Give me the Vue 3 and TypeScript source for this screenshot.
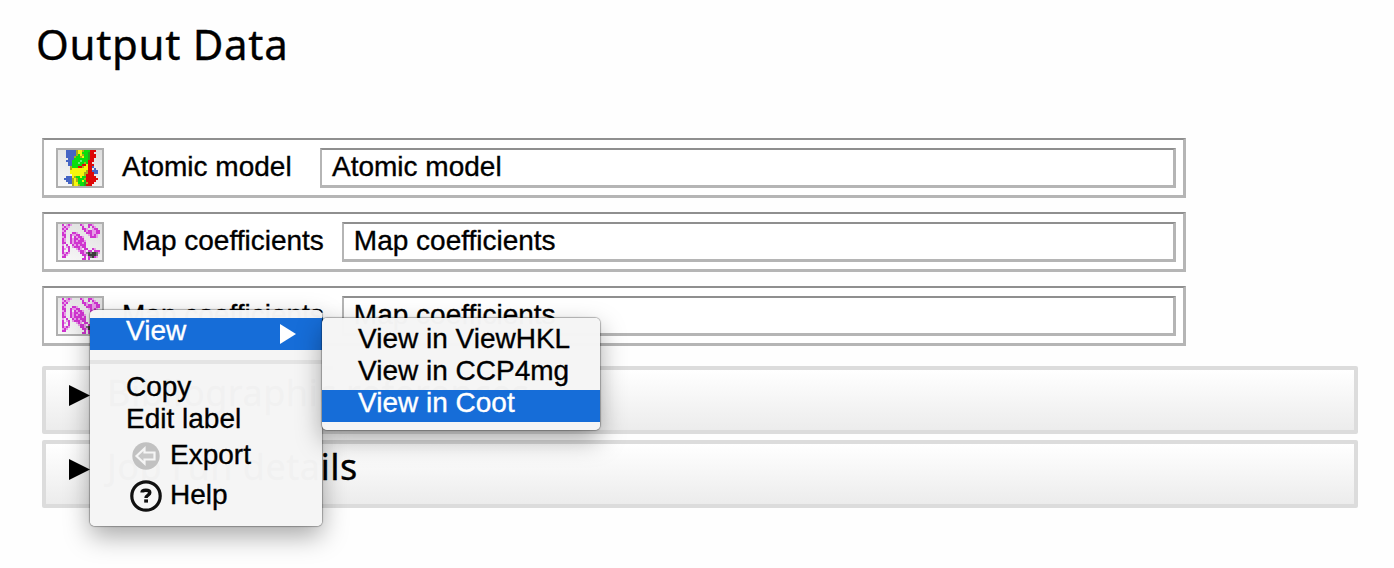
<script setup lang="ts">
interface DataRow { label: string; value: string; icon: 'model' | 'map' }

const rows: DataRow[] = [
  { label: 'Atomic model', value: 'Atomic model', icon: 'model' },
  { label: 'Map coefficients', value: 'Map coefficients', icon: 'map' },
  { label: 'Map coefficients', value: 'Map coefficients', icon: 'map' },
]

const sections: string[] = ['Bibliographic references', 'Job run details']

const palette: Record<string, string> = {
  B: '#4665c4', G: '#0ade0e', g: '#2fa01c', Y: '#f7f50c', O: '#a9ab1c', L: '#66ee77',
  R: '#dd0808', P: '#cf35cf', p: '#e79be7', K: '#3c3c3c', k: '#777777',
}

const bitmaps: Record<DataRow['icon'], string[]> = {
  model: [
    '....BBBBBOYYOGGGRRR...',
    '....BBBBBOYYGGGgRR....',
    '....BBBBBOGYOGGgRRR...',
    '....BBBBOGGOYGGgRRR...',
    '.....BBBGGGGGGGgRR....',
    '....BBBGGGGLGGGRRR....',
    '.....BBGGGLGGOGRR.....',
    '.....BBGGGGGRRYRRR....',
    '......OGGGRROYYRRB....',
    '......OYYYYYYYYRR.B...',
    '......YYYYYYYYORRBBB..',
    '......YYYYYYYOORRRBB..',
    '.......YYYYYYORRRR....',
    '....BBBYOGGYGGRRRRR...',
    '...BBBBOYOGGGORRRRRR..',
    '....BBBOYOGGYGRRRRR...',
    '.....BBOYYGGGgORRR....',
    '.......OYYOGGgRRR.....',
  ],
  map: [
    '..P.pPp....Pp..PPp....',
    '..pPpp......P..P.Pp...',
    '..PpP.......PPp..pPP..',
    '..pP.........PpPPppPP.',
    '..Pp...PPp....PPPppPP.',
    '..PP..PppPP....pPpPp..',
    '..pP..P.PpPPp...PPPp..',
    '..Pp..PpPPpPP.........',
    '..Pp..PpPpPPPp........',
    '..PP..PpPPPPpP........',
    '..p.P..PpPpPPP........',
    '..P.pP.pPPPpPP........',
    '..Pp.P...pPp.PP..Pp...',
    '..P..P....pPPp.PP.PPP.',
    '..PpPp.....PPpkKkKKkp.',
    '..pPp.......PPpKKKKk..',
    '..PP.........P.PkKPp..',
    '............PP.P......',
  ],
}

interface Pixel { x: number; y: number; fill: string }

function pixels(name: DataRow['icon']): Pixel[] {
  return bitmaps[name].flatMap((line, y) =>
    [...line].flatMap((c, x) => (c === '.' ? [] : [{ x, y, fill: palette[c] }])),
  )
}
</script>

<template>
  <main class="page">
    <h1 class="title">Output Data</h1>

    <div class="rows">
      <div v-for="(row, i) in rows" :key="i" class="row">
        <svg class="thumb" viewBox="0 0 22 18" shape-rendering="crispEdges">
          <rect v-for="(p, n) in pixels(row.icon)" :key="n" :x="p.x" :y="p.y" width="1" height="1" :fill="p.fill" />
        </svg>
        <span class="label">{{ row.label }}</span>
        <div class="field">{{ row.value }}</div>
      </div>
    </div>

    <div class="sections">
      <div v-for="s in sections" :key="s" class="section">
        <svg class="disclosure" viewBox="0 0 21 21"><path d="M0 0L21 10.5L0 21Z" /></svg>
        <span class="section-title">{{ s }}</span>
      </div>
    </div>

    <div class="menu main-menu">
      <div class="item selected">
        <span>View</span>
        <svg class="sub-arrow" viewBox="0 0 16 20"><path d="M0 0L16 10L0 20Z" fill="#fff" /></svg>
      </div>
      <div class="separator"></div>
      <div class="item">Copy</div>
      <div class="item">Edit label</div>
      <div class="item with-icon">
        <svg class="icon" viewBox="0 0 32 32">
          <circle cx="16" cy="16" r="13.7" fill="#c1c1c1" />
          <path d="M6.5 16L14.5 8.5V12.5H24.5V19.5H14.5V23.5Z" fill="#c8c8c8" stroke="#f5f5f5" stroke-width="2.2" />
        </svg>
        <span>Export</span>
      </div>
      <div class="item with-icon">
        <svg class="icon" viewBox="0 0 32 32">
          <circle cx="16" cy="16" r="14.2" fill="#f8f8f8" stroke="#111" stroke-width="3.2" />
          <path d="M12 12.6C12 9.6 19.8 9.4 19.8 12.8C19.8 15.2 16 15 16 18" fill="none" stroke="#111" stroke-width="3.4" />
          <rect x="14.2" y="19.4" width="3.8" height="3.2" fill="#111" />
        </svg>
        <span>Help</span>
      </div>
    </div>

    <div class="menu sub-menu">
      <div class="item">View in ViewHKL</div>
      <div class="item">View in CCP4mg</div>
      <div class="item selected">View in Coot</div>
    </div>
  </main>
</template>

<style>
body { background: #fefefe; }
</style>

<style scoped>
.page {
  position: relative;
  box-sizing: border-box;
  width: 1394px;
  height: 568px;
  padding: 15px 36px 0 42px;
  overflow: hidden;
  background: #fefefe;
  color: #000;
  font-family: "Liberation Sans", Arial, sans-serif;
  font-size: 28px;
  -webkit-text-stroke: 0.35px currentColor;
}
.title {
  margin: 0 0 65px -6px;
  height: 58px;
  font: 400 42px/58px "Noto Sans", sans-serif;
  letter-spacing: 0.7px;
  white-space: nowrap;
}
.rows { display: flex; flex-direction: column; gap: 14px; width: 1144px; }
.row, .field {
  box-sizing: border-box;
  border-style: solid;
  border-width: 2px 3px 3px 2px;
  border-color: #8f8f8f #b5b5b5 #b5b5b5 #b5b5b5;
  background: #fff;
}
.row { display: flex; height: 60px; padding: 8px 7px 7px 12px; }
.thumb {
  box-sizing: border-box;
  flex: none;
  width: 48px;
  height: 40px;
  border: 2px solid #b0b0b0;
  background: linear-gradient(200deg, #dedede, #f8f8f8);
}
.label { min-width: 180px; margin: 0 18px; line-height: 37px; white-space: nowrap; }
.field { flex: 1; height: 40px; padding-left: 10px; line-height: 33px; white-space: nowrap; }

.sections { display: flex; flex-direction: column; gap: 6px; margin-top: 20px; }
.section {
  display: flex;
  align-items: center;
  box-sizing: border-box;
  height: 68px;
  padding-left: 23px;
  border: 4px solid #dcdcdc;
  border-radius: 2px;
  background: linear-gradient(#fff, #ececec);
}
.disclosure { width: 21px; height: 21px; margin-top: -10px; flex: none; }
.section-title {
  margin: -15px 0 0 17px;
  font: 400 36px/50px "Noto Sans", sans-serif;
  letter-spacing: 0.5px;
  white-space: nowrap;
}

.menu {
  position: absolute;
  box-sizing: border-box;
  padding: 8px 0;
  border-radius: 5px;
  background: rgba(245, 245, 245, 0.985);
  box-shadow: 0 0 1px 1px rgba(0, 0, 0, 0.28), 0 10px 26px rgba(0, 0, 0, 0.34);
}
.main-menu { left: 90px; top: 310px; width: 232px; height: 216px; }
.sub-menu { left: 322px; top: 318px; width: 278px; height: 112px; }
.item {
  display: flex;
  justify-content: space-between;
  box-sizing: border-box;
  height: 32px;
  padding: 0 26px 0 36px;
  line-height: 25px;
  white-space: nowrap;
}
.selected { background: #166dd8; color: #fff; }
.sub-arrow { width: 16px; height: 20px; margin-top: 6px; }
.separator { height: 4px; margin: 10px 0; background: #e4e4e4; }
.with-icon { justify-content: flex-start; height: 40px; padding-left: 40px; line-height: 33px; }
.icon { flex: none; width: 32px; height: 32px; margin: 2px 8px 0 0; }
</style>
